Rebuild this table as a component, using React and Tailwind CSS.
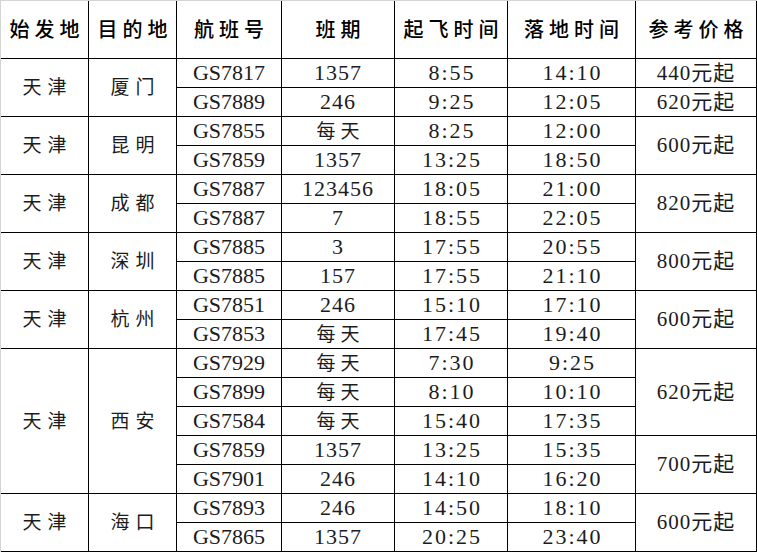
import React from 'react';

const SPAN = { 1: '', 2: 'row-span-2', 3: 'row-span-3', 5: 'row-span-5' };

const HEADERS = ['始发地', '目的地', '航班号', '班期', '起飞时间', '落地时间', '参考价格'];

const ROUTES = [
  { from: '天津', to: '厦门',
    flights: [['GS7817', '1357', '8:55', '14:10'], ['GS7889', '246', '9:25', '12:05']],
    prices: { 0: ['440元起', 1], 1: ['620元起', 1] } },
  { from: '天津', to: '昆明',
    flights: [['GS7855', '每天', '8:25', '12:00'], ['GS7859', '1357', '13:25', '18:50']],
    prices: { 0: ['600元起', 2] } },
  { from: '天津', to: '成都',
    flights: [['GS7887', '123456', '18:05', '21:00'], ['GS7887', '7', '18:55', '22:05']],
    prices: { 0: ['820元起', 2] } },
  { from: '天津', to: '深圳',
    flights: [['GS7885', '3', '17:55', '20:55'], ['GS7885', '157', '17:55', '21:10']],
    prices: { 0: ['800元起', 2] } },
  { from: '天津', to: '杭州',
    flights: [['GS7851', '246', '15:10', '17:10'], ['GS7853', '每天', '17:45', '19:40']],
    prices: { 0: ['600元起', 2] } },
  { from: '天津', to: '西安',
    flights: [
      ['GS7929', '每天', '7:30', '9:25'],
      ['GS7899', '每天', '8:10', '10:10'],
      ['GS7584', '每天', '15:40', '17:35'],
      ['GS7859', '1357', '13:25', '15:35'],
      ['GS7901', '246', '14:10', '16:20'],
    ],
    prices: { 0: ['620元起', 3], 3: ['700元起', 2] } },
  { from: '天津', to: '海口',
    flights: [['GS7893', '246', '14:50', '18:10'], ['GS7865', '1357', '20:25', '23:40']],
    prices: { 0: ['600元起', 2] } },
];

const cell = 'flex items-center justify-center border-r border-b border-black';

function Cell({ span = 1, className = '', children }) {
  return <div className={`${cell} ${SPAN[span]} ${className}`}>{children}</div>;
}

export default function App() {
  const cells = [];
  ROUTES.forEach((r, gi) => {
    const n = r.flights.length;
    r.flights.forEach((f, i) => {
      if (i === 0) {
        cells.push(<Cell key={`${gi}-from`} span={n} className="text-[19px] tracking-[6px] pl-[6px]">{r.from}</Cell>);
        cells.push(<Cell key={`${gi}-to`} span={n} className="text-[19px] tracking-[6px] pl-[6px]">{r.to}</Cell>);
      }
      cells.push(<Cell key={`${gi}-${i}-no`} className="text-[22px]">{f[0]}</Cell>);
      cells.push(<Cell key={`${gi}-${i}-days`} className={/\d/.test(f[1]) ? 'text-[22px] tracking-[1px]' : 'text-[19px] tracking-[5px] pl-[5px]'}>{f[1]}</Cell>);
      cells.push(<Cell key={`${gi}-${i}-dep`} className="text-[22px] tracking-[2px] pl-[2px]">{f[2]}</Cell>);
      cells.push(<Cell key={`${gi}-${i}-arr`} className="text-[22px] tracking-[2px] pl-[2px]">{f[3]}</Cell>);
      const p = r.prices[i];
      if (p) {
        cells.push(<Cell key={`${gi}-${i}-price`} span={p[1]} className="text-[21px] tracking-[1px]">{p[0]}</Cell>);
      }
    });
  });

  return (
    <div className="w-[757px] h-[552px] bg-white overflow-hidden">
      <div
        className="grid grid-cols-[88px_88px_105px_113px_113px_128px_121px] grid-rows-[58px_repeat(17,29px)] border-l border-t border-[#d4d4d4] text-[#1c1c1c] leading-none"
        style={{ fontFamily: '"Liberation Serif", "Noto Sans CJK SC", serif' }}
      >
        {HEADERS.map((h) => (
          <div key={h} className={`${cell} text-[20px] font-medium text-black tracking-[5px] pl-[5px]`}>{h}</div>
        ))}
        {cells}
      </div>
    </div>
  );
}
